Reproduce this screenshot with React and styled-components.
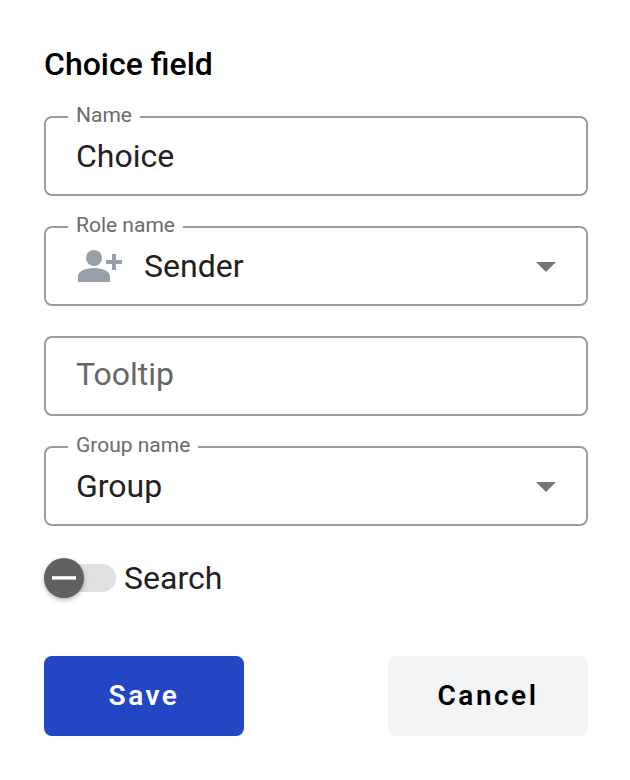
import React from 'react';
import styled, { createGlobalStyle } from 'styled-components';

const Global = createGlobalStyle`
  * { box-sizing: border-box; }
  body { margin: 0; background: #fff; font-family: Roboto, "Liberation Sans", sans-serif; }
`;

const Panel = styled.form`
  display: flex;
  flex-direction: column;
  width: 630px;
  height: 780px;
  padding: 44px 42px 44px 44px;
`;

const Title = styled.h1`
  margin: 0 0 32px;
  font-size: 32px;
  line-height: 40px;
  font-weight: 500;
  color: #000;
`;

const Field = styled.div`
  position: relative;
  display: flex;
  align-items: center;
  height: 80px;
  margin-bottom: 30px;
  padding: 0 30px;
  border: 2px solid #9c9c9c;
  border-radius: 8px;
`;

const Label = styled.span`
  position: absolute;
  top: -15px;
  left: 22px;
  padding: 0 8px;
  background: #fff;
  font-size: 21px;
  line-height: 24px;
  color: #6b6b6b;
`;

const Value = styled.span`
  flex: 1;
  font-size: 32px;
  line-height: 40px;
  padding-bottom: ${(p) => (p.$placeholder ? '4px' : '0')};
  color: ${(p) => (p.$placeholder ? '#666' : '#212121')};
`;

const PersonIcon = styled.svg`
  width: 46px;
  height: 34px;
  margin-right: 22px;
`;

const Arrow = styled.svg`
  width: 20px;
  height: 10px;
  margin-top: 2px;
`;

const SwitchRow = styled.div`
  display: flex;
  align-items: center;
  gap: 8px;
  height: 44px;
`;

const Track = styled.div`
  display: flex;
  align-items: center;
  width: 72px;
  height: 28px;
  border-radius: 14px;
  background: #e0e0e0;
`;

const Knob = styled.span`
  display: flex;
  align-items: center;
  justify-content: center;
  width: 40px;
  height: 40px;
  border-radius: 50%;
  background: #616161;
  box-shadow: 0 2px 4px rgba(0, 0, 0, 0.3);
`;

const Dash = styled.svg`
  width: 24px;
  height: 4px;
`;

const Actions = styled.div`
  display: flex;
  justify-content: space-between;
  margin-top: auto;
`;

const Button = styled.button`
  width: 200px;
  height: 80px;
  border: 0;
  border-radius: 8px;
  padding: 0;
  font: 600 28px/40px Roboto, "Liberation Sans", sans-serif;
  letter-spacing: 2.5px;
  color: ${(p) => (p.$primary ? '#fff' : '#000')};
  background: ${(p) => (p.$primary ? '#2346c5' : '#f3f4f6')};
`;

const Caret = () => (
  <Arrow viewBox="0 0 20 10"><path d="M0 0h20L10 10z" fill="#757575" /></Arrow>
);

export default function App() {
  return (
    <>
      <Global />
      <Panel>
        <Title>Choice field</Title>
        <Field><Label>Name</Label><Value>Choice</Value></Field>
        <Field>
          <Label>Role name</Label>
          <PersonIcon viewBox="0 0 46 34" fill="#999fa8">
            <circle cx="18" cy="9" r="8" />
            <path d="M2 33v-6c0-4.4 7.2-8 16-8s16 3.6 16 8v6zM36 5h4v6h6v4h-6v6h-4v-6h-6v-4h6z" />
          </PersonIcon>
          <Value>Sender</Value>
          <Caret />
        </Field>
        <Field><Value $placeholder>Tooltip</Value></Field>
        <Field><Label>Group name</Label><Value>Group</Value><Caret /></Field>
        <SwitchRow>
          <Track>
            <Knob>
              <Dash viewBox="0 0 24 4"><path d="M0 .2h24v3.4H0z" fill="#fff" /></Dash>
            </Knob>
          </Track>
          <Value>Search</Value>
        </SwitchRow>
        <Actions>
          <Button type="button" $primary>Save</Button>
          <Button type="button">Cancel</Button>
        </Actions>
      </Panel>
    </>
  );
}
